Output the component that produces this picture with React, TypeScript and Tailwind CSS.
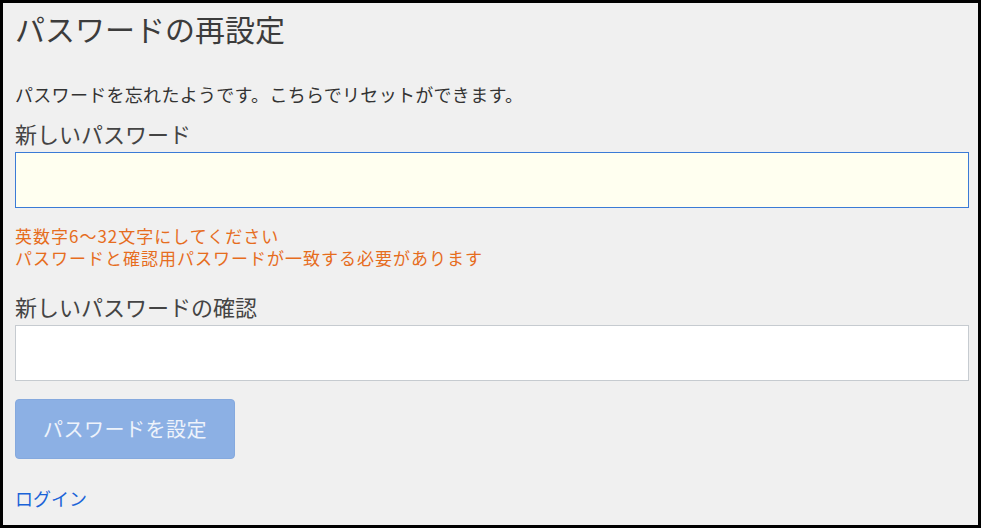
const jp = "font-['Meiryo','Noto_Sans_CJK_JP',sans-serif]"

export default function App() {
  return (
    <div className={`w-[981px] h-[528px] border-[3px] border-black bg-[#f0f0f0] px-[12px] pt-[7px] ${jp}`}>
      <h1 className="text-[30px] leading-[36px] text-[#3c3c3c]">パスワードの再設定</h1>

      <p className="mt-[36px] text-[18px] leading-[24px] tracking-[0.3px] text-[#333]">
        パスワードを忘れたようです。こちらでリセットができます。
      </p>

      <label className="mt-[13px] block text-[22px] leading-[28px] text-[#444]">新しいパスワード</label>
      <input
        type="password"
        className="mt-[5px] block h-[56px] w-[954px] border border-[#3b7bd6] bg-[#fffff0] outline-none"
      />

      <div className="mt-[17px] flex flex-col gap-[1px] text-[17px] leading-[21px] tracking-[1px] text-[#e66d1e]">
        <p>英数字6～32文字にしてください</p>
        <p>パスワードと確認用パスワードが一致する必要があります</p>
      </div>

      <label className="mt-[24px] block text-[22px] leading-[28px] text-[#444]">新しいパスワードの確認</label>
      <input
        type="password"
        className="mt-[5px] block h-[56px] w-[954px] border border-[#c6cbd0] bg-white outline-none"
      />

      <button
        disabled
        className="mt-[18px] block h-[60px] w-[220px] rounded-[4px] border border-[#85a9de] bg-[#8cb0e4] text-[20px] tracking-[0.5px] text-[#eef3fb]"
      >
        パスワードを設定
      </button>

      <a href="#" className="mt-[27px] inline-block text-[18px] leading-[24px] text-[#1a63d8]">
        ログイン
      </a>
    </div>
  )
}
